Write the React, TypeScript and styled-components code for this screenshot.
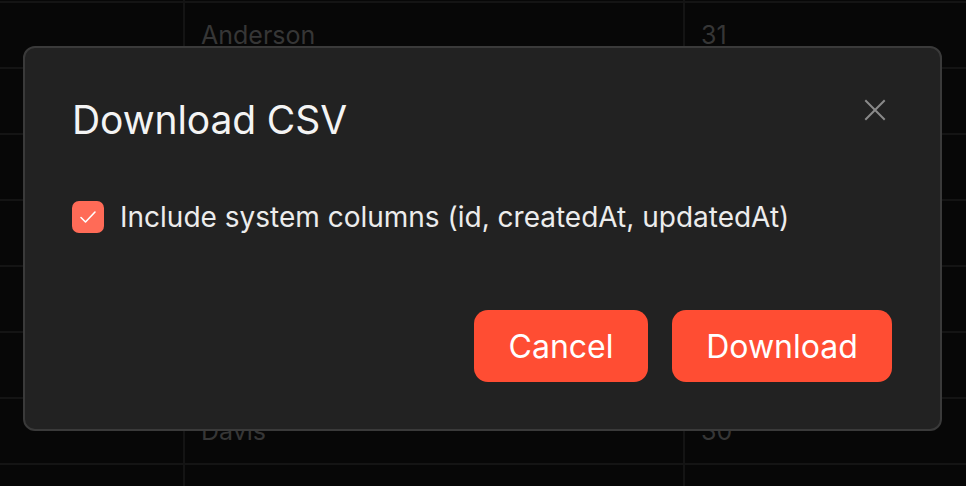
import React, { FC, useState } from "react"
import styled, { createGlobalStyle } from "styled-components"

const GlobalStyle = createGlobalStyle`
  html, body {
    margin: 0;
    padding: 0;
    background: #070707;
    font-family: Inter, "Noto Sans", sans-serif;
    overflow: hidden;
  }
`

type Row = { name: string; age: string }

const rows: Row[] = [
  { name: "", age: "" },
  { name: "Anderson", age: "31" },
  { name: "", age: "" },
  { name: "", age: "" },
  { name: "", age: "" },
  { name: "", age: "" },
  { name: "", age: "" },
  { name: "Davis", age: "30" },
  { name: "", age: "" },
]

const Page = styled.div`
  position: relative;
  width: 966px;
  height: 486px;
  overflow: hidden;
`

const Table = styled.div`
  display: flex;
  flex-direction: column;
  margin-top: -63px;
`

const TableRow = styled.div`
  display: grid;
  grid-template-columns: 183px 500px 1fr;
  height: 66px;
  border-bottom: 2px solid #141414;
  box-sizing: border-box;
`

const Cell = styled.div`
  display: flex;
  align-items: center;
  padding-left: 16px;
  border-left: 2px solid #141414;
  color: #363636;
  font-size: 25px;

  &:first-child {
    border-left: none;
  }
`

const Overlay = styled.div`
  position: absolute;
  inset: 0;
  display: flex;
  align-items: flex-start;
  padding: 46px 0 0 23px;
`

const Dialog = styled.div`
  width: 919px;
  height: 385px;
  box-sizing: border-box;
  background: #222222;
  border: 2px solid #3a3a3a;
  border-radius: 12px;
  padding: 48px 48px 48px 47px;
  display: flex;
  flex-direction: column;
`

const Header = styled.div`
  display: flex;
  align-items: flex-start;
  justify-content: space-between;
`

const Title = styled.h2`
  margin: 0;
  font-size: 39px;
  font-weight: 400;
  color: #f4f4f4;
  line-height: 48px;
  letter-spacing: -0.1px;
`

const CloseButton = styled.button`
  background: none;
  border: none;
  padding: 0;
  width: 24px;
  height: 24px;
  margin-top: 2px;
  margin-right: 5px;
  display: flex;
  align-items: center;
  justify-content: center;
  color: #8a8a8a;
  cursor: pointer;
`

const CheckRow = styled.label`
  display: flex;
  align-items: center;
  gap: 16px;
  margin-top: 57px;
  color: #ececec;
  font-size: 28px;
  line-height: 32px;
  cursor: pointer;
`

const Box = styled.span<{ $checked: boolean }>`
  width: 32px;
  height: 32px;
  border-radius: 7px;
  background: ${p => (p.$checked ? "#ff6b57" : "transparent")};
  border: ${p => (p.$checked ? "none" : "2px solid #666")};
  display: flex;
  align-items: center;
  justify-content: center;
  flex-shrink: 0;
`

const Actions = styled.div`
  display: flex;
  justify-content: flex-end;
  gap: 24px;
  margin-top: auto;
  margin-bottom: -1px;
`

const ActionButton = styled.button<{ $width: number }>`
  width: ${p => p.$width}px;
  height: 72px;
  border: none;
  border-radius: 14px;
  background: #ff4d33;
  color: #ffffff;
  font-family: Inter, "Noto Sans", sans-serif;
  font-size: 32px;
  font-weight: 400;
  cursor: pointer;
`

const App: FC = () => {
  const [systemCols, setSystemCols] = useState(true)

  return (
    <Page>
      <GlobalStyle />
      <Table>
        {rows.map((r, i) => (
          <TableRow key={i}>
            <Cell />
            <Cell>{r.name}</Cell>
            <Cell>{r.age}</Cell>
          </TableRow>
        ))}
      </Table>
      <Overlay>
        <Dialog>
          <Header>
            <Title>Download CSV</Title>
            <CloseButton aria-label="Close">
              <svg width="22" height="22" viewBox="0 0 22 22" fill="none" stroke="currentColor" strokeWidth="2" strokeLinecap="square">
                <path d="M2 2 L20 20 M20 2 L2 20" />
              </svg>
            </CloseButton>
          </Header>
          <CheckRow onClick={() => setSystemCols(!systemCols)}>
            <Box $checked={systemCols}>
              {systemCols && (
                <svg width="22" height="22" viewBox="0 0 22 22" fill="none" stroke="#ffffff" strokeWidth="1.6" strokeLinecap="round" strokeLinejoin="round">
                  <path d="M4 11.5 L8.5 16 L18 6" />
                </svg>
              )}
            </Box>
            Include system columns (id, createdAt, updatedAt)
          </CheckRow>
          <Actions>
            <ActionButton $width={174}>Cancel</ActionButton>
            <ActionButton $width={220}>Download</ActionButton>
          </Actions>
        </Dialog>
      </Overlay>
    </Page>
  )
}

export default App
